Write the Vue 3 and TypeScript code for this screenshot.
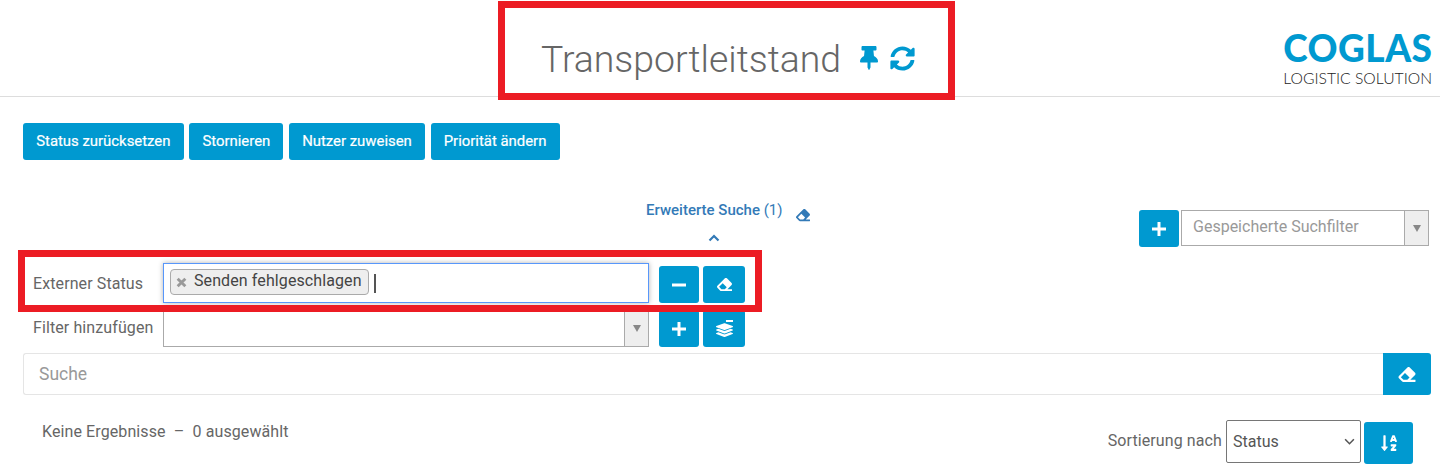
<template>
  <div class="page">
    <header class="top">
      <div></div>
      <div class="title-wrap">
        <h1>Transportleitstand</h1>
        <svg class="pin" viewBox="0 0 384 512"><path :d="icons.pin" /></svg>
        <svg class="sync" viewBox="0 0 512 512"><path :d="icons.sync" /></svg>
      </div>
      <div class="logo">
        <span class="logo-main">COGLAS</span>
        <span class="logo-sub">LOGISTIC SOLUTION</span>
      </div>
    </header>

    <div class="toolbar">
      <button v-for="a in actions" :key="a" class="btn text-btn">{{ a }}</button>
    </div>

    <div class="adv-row">
      <div class="adv">
        <div class="adv-head">
          <span><b>Erweiterte Suche</b> (1)</span>
          <svg class="adv-eraser" viewBox="0 0 512 512"><path :d="icons.eraser" /></svg>
        </div>
        <svg class="chevron" viewBox="0 0 12 8"><path d="M1.5 6.500 6 2l4.500 4.500" /></svg>
      </div>
      <div class="saved">
        <button class="btn icon-btn saved-plus"><svg viewBox="0 0 16 16"><path :d="icons.plus" /></svg></button>
        <div class="combo saved-combo">
          <span class="placeholder">Gespeicherte Suchfilter</span>
          <span class="combo-arrow"><i></i></span>
        </div>
      </div>
    </div>

    <div class="filter-row first">
      <label>Externer Status</label>
      <div class="tag-input">
        <span class="tag">
          <svg class="tag-x" viewBox="0 0 10 10"><path d="M1.500 1.500l7 7M8.500 1.500l-7 7" /></svg>
          Senden fehlgeschlagen
        </span>
        <span class="caret"></span>
      </div>
      <div class="row-btns">
        <button class="btn icon-btn"><svg viewBox="0 0 16 16"><path :d="icons.minus" /></svg></button>
        <button class="btn icon-btn wide"><svg class="eraser" viewBox="0 0 512 512"><path :d="icons.eraser" /></svg></button>
      </div>
    </div>

    <div class="filter-row second">
      <label>Filter hinzufügen</label>
      <div class="combo">
        <span class="placeholder"></span>
        <span class="combo-arrow"><i></i></span>
      </div>
      <div class="row-btns">
        <button class="btn icon-btn"><svg viewBox="0 0 16 16"><path :d="icons.plus" /></svg></button>
        <button class="btn icon-btn wide">
          <svg class="layers" viewBox="0 0 512 512">
            <g transform="translate(0 96) scale(1 .81)"><path :d="icons.layers" /></g>
            <rect x="300" y="0" width="212" height="60" />
          </svg>
        </button>
      </div>
    </div>

    <div class="search">
      <div class="search-input">Suche</div>
      <button class="btn search-btn"><svg class="eraser" viewBox="0 0 512 512"><path :d="icons.eraser" /></svg></button>
    </div>

    <div class="bottom">
      <div class="result">Keine Ergebnisse &nbsp;–&nbsp; 0 ausgewählt</div>
      <div class="sort">
        <span class="sort-label">Sortierung nach</span>
        <div class="select-wrap">
          <select>
            <option>Status</option>
          </select>
          <svg class="select-chevron" viewBox="0 0 12 8"><path d="M1 1.500l5 5 5-5" /></svg>
        </div>
        <button class="btn sort-btn"><svg viewBox="0 0 448 512"><path :d="icons.sort" /></svg></button>
      </div>
    </div>

    <div class="mark mark-title"></div>
    <div class="mark mark-filter"></div>
  </div>
</template>

<script setup lang="ts">
const actions: string[] = ['Status zurücksetzen', 'Stornieren', 'Nutzer zuweisen', 'Priorität ändern']

const icons = {
  pin: 'M298.028 214.267L285.793 96H328c13.255 0 24-10.745 24-24V24c0-13.255-10.745-24-24-24H56C42.745 0 32 10.745 32 24v48c0 13.255 10.745 24 24 24h42.207L85.972 214.267C37.465 236.82 0 277.261 0 328c0 13.255 10.745 24 24 24h136v104.007c0 1.242.289 2.467.845 3.578l24 48c2.941 5.882 11.364 5.893 14.311 0l24-48a8.008 8.008 0 0 0 .845-3.578V352h136c13.255 0 24-10.745 24-24-.001-51.183-37.983-91.42-85.973-113.733z',
  sync: 'M370.72 133.28C339.458 104.008 298.888 87.962 255.848 88c-77.458.068-144.328 53.178-162.791 126.85-1.344 5.363-6.122 9.15-11.651 9.15H24.103c-7.498 0-13.194-6.807-11.807-14.176C33.933 94.924 134.813 8 256 8c66.448 0 126.791 26.136 171.315 68.685L463.03 40.97C478.149 25.851 504 36.559 504 57.941V192c0 13.255-10.745 24-24 24H345.941c-21.382 0-32.09-25.851-16.971-40.971l41.75-41.749zM32 296h134.059c21.382 0 32.09 25.851 16.971 40.971l-41.75 41.75c31.262 29.273 71.835 45.319 114.876 45.28 77.418-.07 144.315-53.144 162.787-126.849 1.344-5.363 6.122-9.15 11.651-9.15h57.304c7.498 0 13.194 6.807 11.807 14.176C478.067 417.076 377.187 504 256 504c-66.448 0-126.791-26.136-171.315-68.685L48.97 471.03C33.851 486.149 8 475.441 8 454.059V320c0-13.255 10.745-24 24-24z',
  eraser: 'M497.941 273.941c18.745-18.745 18.745-49.137 0-67.882l-160-160c-18.745-18.745-49.137-18.746-67.883 0l-256 256c-18.745 18.745-18.745 49.137 0 67.882l96 96A48.004 48.004 0 0 0 144 480h356c6.627 0 12-5.373 12-12v-40c0-6.627-5.373-12-12-12H355.883l142.058-142.059zm-302.627-62.627l137.373 137.373L265.373 416H150.628l-80-80 124.686-124.686z',
  layers: 'M12.41 148.02l232.94 105.67c6.8 3.09 14.49 3.09 21.29 0l232.94-105.67c16.55-7.51 16.55-32.52 0-40.03L266.65 2.31a25.607 25.607 0 0 0-21.29 0L12.41 107.98c-16.55 7.51-16.55 32.53 0 40.04zm487.18 88.28l-58.09-26.33-161.64 73.27c-7.56 3.43-15.59 5.17-23.86 5.17s-16.29-1.74-23.86-5.17L70.51 209.97l-58.1 26.33c-16.55 7.5-16.55 32.5 0 40l232.94 105.59c6.8 3.08 14.49 3.08 21.29 0L499.59 276.3c16.55-7.5 16.55-32.5 0-40zm0 127.8l-57.87-26.23-161.86 73.37c-7.56 3.43-15.59 5.17-23.86 5.17s-16.29-1.74-23.86-5.17L70.29 337.87 12.41 364.1c-16.55 7.5-16.55 32.5 0 40l232.94 105.59c6.8 3.08 14.49 3.08 21.29 0L499.59 404.1c16.55-7.5 16.55-32.5 0-40z',
  sort: 'M176 352h-48V48a16 16 0 0 0-16-16H80a16 16 0 0 0-16 16v304H16c-14.19 0-21.36 17.24-11.28 27.31l80 96a16 16 0 0 0 22.62 0l80-96C197.35 369.26 190.22 352 176 352zm240-64H288a16 16 0 0 0-16 16v32a16 16 0 0 0 16 16h56l-61.26 70.45A32 32 0 0 0 272 446.37V464a16 16 0 0 0 16 16h128a16 16 0 0 0 16-16v-32a16 16 0 0 0-16-16h-56l61.26-70.45A32 32 0 0 0 432 321.63V304a16 16 0 0 0-16-16zm31.06-85.38l-59.27-160A16 16 0 0 0 372.72 32h-41.44a16 16 0 0 0-15.07 10.62l-59.27 160A16 16 0 0 0 272 224h24.83a16 16 0 0 0 15.23-11.08l4.42-12.92h71l4.41 12.92A16 16 0 0 0 407.16 224H432a16 16 0 0 0 15.06-21.38zM335.61 144L352 96l16.39 48z',
  plus: 'M6.500 1h3v5.500H15v3H9.500V15h-3V9.500H1v-3h5.500z',
  minus: 'M1 6.500h14v3H1z'
}
</script>

<style>
html, body {
  margin: 0;
  background: #fff;
  overflow: hidden;
}
</style>

<style scoped>
.page {
  position: relative;
  width: 1440px;
  height: 468px;
  font-family: Roboto, "Liberation Sans", sans-serif;
  color: #666;
  overflow: hidden;
}

.top {
  display: grid;
  grid-template-columns: 1fr auto 1fr;
  height: 96px;
  padding: 0 8px 0 24px;
  border-bottom: 1px solid #ddd;
}

.title-wrap {
  display: flex;
  align-items: center;
  padding-top: 21px;
}

h1 {
  margin: 0;
  font-size: 37.4px;
  font-weight: 300;
  color: #666;
  line-height: 40px;
}

.pin {
  width: 18px;
  height: 24px;
  margin: -1px 0 0 19px;
  fill: #0099d0;
}

.sync {
  width: 25px;
  height: 25px;
  margin: -1px 0 0 12px;
  fill: #0099d0;
}

.logo {
  justify-self: end;
  display: flex;
  flex-direction: column;
  align-items: flex-end;
  padding-top: 26px;
  font-family: Lato, sans-serif;
}

.logo-main {
  font-size: 37px;
  line-height: 44px;
  font-weight: 900;
  letter-spacing: 0.5px;
  margin-right: -0.5px;
  color: #0099d0;
}

.logo-sub {
  font-size: 15.7px;
  line-height: 17px;
  font-weight: 300;
  color: #222;
}

.btn {
  border: 0;
  padding: 0;
  background: #0099d0;
  color: #fff;
  border-radius: 3px;
  font-family: inherit;
  display: flex;
  align-items: center;
  justify-content: center;
}

.toolbar {
  display: flex;
  gap: 5.5px;
  margin: 26px 0 0 23px;
}

.text-btn {
  height: 37px;
  padding: 0 13.2px 2px;
  font-size: 14.9px;
  font-weight: 400;
  -webkit-text-stroke: 0.2px #fff;
}

.adv-row {
  display: flex;
  justify-content: space-between;
  height: 63px;
  margin-top: 40px;
  padding: 0 11px 0 646px;
}

.adv {
  display: flex;
  flex-direction: column;
  width: 166px;
}

.adv-head {
  display: flex;
  align-items: flex-start;
  font-size: 15px;
  line-height: 20px;
  color: #337ab7;
}

.adv-head b {
  font-weight: 500;
}

.adv-eraser {
  width: 16px;
  height: 14px;
  margin: 8px 0 0 12px;
  flex-shrink: 0;
  fill: #337ab7;
}

.chevron {
  width: 12px;
  height: 8px;
  margin: 12px 0 0 62px;
  fill: none;
  stroke: #337ab7;
  stroke-width: 2.2;
}

.saved {
  display: flex;
  gap: 2px;
  margin-top: 10px;
  height: 37px;
}

.saved-plus {
  width: 40px;
}

.icon-btn {
  width: 40px;
  height: 37px;
}

.icon-btn.wide {
  width: 42px;
}

.icon-btn svg {
  width: 16px;
  height: 16px;
  fill: #fff;
}

.icon-btn svg.eraser {
  width: 17px;
  height: 15px;
}

.icon-btn svg.layers {
  width: 17px;
  height: 17px;
}

.combo {
  box-sizing: border-box;
  display: flex;
  align-items: stretch;
  width: 486px;
  height: 37px;
  border: 1px solid #aaa;
  background: #fff;
}

.combo.saved-combo {
  width: 248px;
  height: 36px;
}

.placeholder {
  flex: 1;
  padding-left: 11px;
  font-size: 16px;
  line-height: 32px;
  color: #999;
}

.combo-arrow {
  display: flex;
  align-items: center;
  justify-content: center;
  width: 23px;
  background: #eee;
  border-left: 1px solid #aaa;
}

.combo-arrow i {
  border-style: solid;
  border-width: 7px 4px 0;
  border-color: #888 transparent transparent;
}

.filter-row {
  display: grid;
  grid-template-columns: 130px 486px auto;
  align-items: start;
  padding-left: 33px;
  font-size: 16px;
  letter-spacing: 0.1px;
}

.filter-row label {
  line-height: 20px;
}

.first {
  height: 40px;
}

.first label {
  margin-top: 11px;
}

.second {
  margin-top: 7px;
  height: 37px;
}

.second label {
  margin-top: 8px;
}

.tag-input {
  box-sizing: border-box;
  display: flex;
  align-items: center;
  height: 40px;
  padding: 0 6px;
  border: 1px solid #5897fb;
  box-shadow: 0 0 5px rgba(0, 0, 0, 0.3);
  background: #fff;
}

.tag {
  display: flex;
  align-items: center;
  box-sizing: border-box;
  height: 26px;
  margin-bottom: 3px;
  padding: 0 6px 2px 5px;
  border: 1px solid #aaa;
  border-radius: 4px;
  background: #eee;
  font-size: 16px;
  color: #444;
}

.tag-x {
  width: 11px;
  height: 11px;
  margin: 3px 7px 0 0;
  fill: none;
  stroke: #999;
  stroke-width: 2.6;
}

.caret {
  width: 2px;
  height: 19px;
  margin-left: 5px;
  background: #555;
}

.row-btns {
  display: flex;
  gap: 4px;
  margin-left: 10px;
}

.first .row-btns {
  margin-top: 3px;
}

.search {
  display: flex;
  height: 42px;
  margin: 6px 9px 0 23px;
}

.search-input {
  flex: 1;
  box-sizing: border-box;
  padding-left: 15px;
  border: 1px solid #e5e5e5;
  border-right: 0;
  border-radius: 3px 0 0 3px;
  font-size: 17.5px;
  line-height: 40px;
  color: #999;
}

.search-btn {
  width: 48px;
  border-radius: 0 3px 3px 0;
}

.search-btn svg {
  width: 20px;
  height: 17px;
  fill: #fff;
}

.bottom {
  display: flex;
  justify-content: space-between;
  margin: 25px 27px 0 42px;
}

.result {
  margin-top: 2px;
  font-size: 16px;
  letter-spacing: 0.1px;
  line-height: 20px;
}

.sort {
  display: flex;
  align-items: flex-start;
  font-size: 16px;
  letter-spacing: 0.1px;
}

.sort-label {
  margin-top: 11px;
  line-height: 20px;
}

.select-wrap {
  position: relative;
  margin-left: 4px;
}

.select-wrap select {
  display: block;
  box-sizing: border-box;
  width: 135px;
  height: 43px;
  padding-left: 6px;
  border: 1px solid #767676;
  border-radius: 2px;
  background: #fff;
  font-family: inherit;
  font-size: 16px;
  color: #555;
  appearance: none;
}

.select-chevron {
  position: absolute;
  right: 6px;
  top: 18px;
  width: 11px;
  height: 7px;
  fill: none;
  stroke: #555;
  stroke-width: 1.8;
}

.sort-btn {
  width: 49px;
  height: 42px;
  margin: 2px 0 0 3px;
}

.sort-btn svg {
  width: 16px;
  height: 18px;
  fill: #fff;
}

.mark {
  position: absolute;
  box-sizing: border-box;
  border: 7px solid #ec1c24;
  pointer-events: none;
}

.mark-title {
  left: 498px;
  top: 1px;
  width: 457px;
  height: 99px;
}

.mark-filter {
  left: 18px;
  top: 250px;
  width: 744px;
  height: 62px;
}
</style>
